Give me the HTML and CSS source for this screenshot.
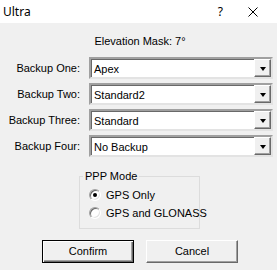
FILE: index.html
```html
<!DOCTYPE html>
<html>
<head>
<meta charset="utf-8">
<link rel="stylesheet" href="styles.css">
</head>
<body>
<div class="window">
  <div class="titlebar">
    <span class="title">Ultra</span>
    <span class="help">?</span>
    <svg class="close" width="10" height="10" viewBox="0 0 10 10"><path d="M0.5 0.5 L9.5 9.5 M9.5 0.5 L0.5 9.5" stroke="#000" stroke-width="1" fill="none"/></svg>
  </div>
  <div class="content">
    <div class="elev">Elevation Mask: 7°</div>
    <div class="form">
      <label class="lbl">Backup One:</label>
      <div class="combo"><span class="val">Apex</span><span class="drop"><i class="arrow"></i></span></div>
      <label class="lbl">Backup Two:</label>
      <div class="combo"><span class="val">Standard2</span><span class="drop"><i class="arrow"></i></span></div>
      <label class="lbl">Backup Three:</label>
      <div class="combo"><span class="val">Standard</span><span class="drop"><i class="arrow"></i></span></div>
      <label class="lbl">Backup Four:</label>
      <div class="combo"><span class="val">No Backup</span><span class="drop"><i class="arrow"></i></span></div>
    </div>
    <fieldset class="group">
      <legend>PPP Mode</legend>
      <div class="radio-row"><span class="radio checked"></span><span>GPS Only</span></div>
      <div class="radio-row"><span class="radio"></span><span>GPS and GLONASS</span></div>
    </fieldset>
    <div class="buttons">
      <div class="btn default">Confirm</div>
      <div class="btn">Cancel</div>
    </div>
  </div>
</div>
</body>
</html>
```

FILE: styles.css
```css
* { box-sizing: border-box; }
html, body { margin: 0; padding: 0; }
body {
  width: 277px;
  height: 270px;
  background: #f0f0f0;
  font-family: "Liberation Sans", Arial, sans-serif;
  font-size: 11px;
  color: #000;
  overflow: hidden;
}
.titlebar {
  height: 23px;
  background: #fff;
  display: flex;
  align-items: center;
  padding-left: 3px;
  font-family: "Noto Sans", "Liberation Sans", sans-serif;
  font-size: 12px;
}
.title { flex: 1; }
.help { font-size: 12px; margin-right: 25px; }
.close { margin-right: 19px; }
.content { padding-top: 12px; }
.elev {
  text-align: center;
  line-height: 13px;
  height: 13px;
  padding-left: 3px;
}
.form {
  margin-top: 9px;
  display: grid;
  grid-template-columns: 80px 184px;
  column-gap: 9px;
  row-gap: 4px;
  grid-auto-rows: 22px;
}
.lbl {
  text-align: right;
  align-self: center;
  white-space: nowrap;
  line-height: 13px;
}
.combo {
  display: flex;
  align-items: stretch;
  background: #fff;
  border-style: solid;
  border-width: 2px;
  border-color: #a0a0a0 #e3e3e3 #e3e3e3 #a0a0a0;
  box-shadow: inset 1px 1px 0 #696969;
}
.val {
  flex: 1;
  padding-left: 3px;
  line-height: 18px;
  padding-top: 1px;
}
.drop {
  width: 17px;
  background: #f0f0f0;
  border-style: solid;
  border-width: 1px;
  border-color: #fff #696969 #696969 #fff;
  box-shadow: inset -1px -1px 0 #a0a0a0;
  display: flex;
  align-items: center;
  justify-content: center;
}
.arrow {
  width: 0;
  height: 0;
  border-left: 3.5px solid transparent;
  border-right: 3.5px solid transparent;
  border-top: 4px solid #000;
  margin-top: 1px;
}
.group {
  margin: 13px 0 0 79px;
  width: 121px;
  padding: 3px 0 6px 9px;
  border: 1px solid #dcdcdc;
  min-width: 0;
}
.group legend {
  padding: 0 2px;
  margin-left: -6px;
  line-height: 13px;
}
.radio-row {
  height: 18px;
  display: flex;
  align-items: center;
  gap: 5px;
  white-space: nowrap;
}
.radio {
  width: 12px;
  height: 12px;
  border-radius: 50%;
  background: #fff;
  border: 1px solid;
  border-color: #a0a0a0 #fff #fff #a0a0a0;
  box-shadow: inset 1px 1px 0 #696969, inset -1px -1px 0 #e3e3e3;
  display: flex;
  align-items: center;
  justify-content: center;
  flex: none;
}
.radio.checked::after {
  content: "";
  width: 4px;
  height: 4px;
  border-radius: 50%;
  background: #000;
}
.buttons {
  margin: 11px 0 0 42px;
  display: flex;
  gap: 12px;
}
.btn {
  width: 92px;
  height: 23px;
  background: #f0f0f0;
  border-style: solid;
  border-width: 1px;
  border-color: #fff #696969 #696969 #fff;
  box-shadow: inset -1px -1px 0 #a0a0a0;
  display: flex;
  align-items: center;
  justify-content: center;
  padding-bottom: 1px;
}
.btn.default {
  border: 1px solid #000;
  box-shadow: inset 1px 1px 0 #fff, inset -1px -1px 0 #696969, inset -2px -2px 0 #a0a0a0;
}
```
